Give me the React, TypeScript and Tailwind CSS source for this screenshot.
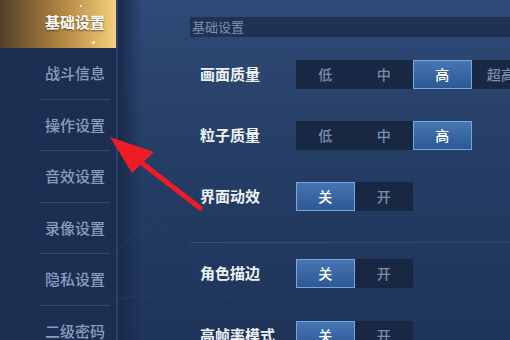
import React from 'react';

const menu = ['基础设置', '战斗信息', '操作设置', '音效设置', '录像设置', '隐私设置', '二级密码'];

type Row = { label: string; options: string[]; active: number; mt: string };

const rows: Row[] = [
  { label: '画面质量', options: ['低', '中', '高', '超高'], active: 2, mt: 'mt-[23px]' },
  { label: '粒子质量', options: ['低', '中', '高'], active: 2, mt: 'mt-[32px]' },
  { label: '界面动效', options: ['关', '开'], active: 0, mt: 'mt-[32px]' },
];

const rows2: Row[] = [
  { label: '角色描边', options: ['关', '开'], active: 0, mt: 'mt-[16px]' },
  { label: '高帧率模式', options: ['关', '开'], active: 0, mt: 'mt-[33px]' },
];

function Segmented({ options, active }: { options: string[]; active: number }) {
  return (
    <div className="flex h-[29px] bg-[#17263f]/90">
      {options.map((o, i) => (
        <div
          key={o}
          className={
            i === active
              ? 'flex w-[58.5px] shrink-0 items-center justify-center border border-[#79a6dc] bg-gradient-to-b from-[#4676b3] to-[#2d5893] text-[14px] font-medium text-white'
              : 'flex w-[58.5px] shrink-0 items-center justify-center text-[14px] font-medium text-[#7b8daa]'
          }
        >
          {o}
        </div>
      ))}
    </div>
  );
}

function SettingRow({ row }: { row: Row }) {
  return (
    <div className={`${row.mt} flex items-center pl-[10px]`}>
      <div className="w-[96px] shrink-0 whitespace-nowrap text-[15px] font-semibold text-[#eef2f8]">{row.label}</div>
      <Segmented options={row.options} active={row.active} />
    </div>
  );
}

export default function App() {
  return (
    <div
      className="relative flex h-[340px] w-[510px] overflow-hidden bg-[#1e3358]"
      style={{ fontFamily: '"Noto Sans CJK SC", "Noto Sans", sans-serif' }}
    >
      {/* sidebar */}
      <div className="flex w-[118px] shrink-0 flex-col border-r-2 border-[#2a426b] bg-[#1c2f53]">
        <div className="mt-[-4px] flex flex-col">
          {menu.map((m, i) =>
            i === 0 ? (
              <div
                key={m}
                className="relative flex h-[52px] items-center bg-gradient-to-r from-[#50402a] via-[#ad823f] to-[#f6d07a] pl-[45px] text-[15px] font-semibold text-white [text-shadow:0_1px_2px_rgba(60,30,0,0.7)]"
              >
                {m}
                <span className="absolute left-[80px] top-[9px] h-[2px] w-[2px] rounded-full bg-[#fff1c8]" />
                <span className="absolute left-[92px] top-[45px] h-[3px] w-[3px] rounded-full bg-[#fff1c8]" />
              </div>
            ) : (
              <div key={m} className="flex h-[51.5px] flex-col">
                <div className="flex flex-1 items-center pl-[45px] text-[15px] font-medium text-[#8a9dbd]">{m}</div>
                <div className="ml-[40px] mr-[6px] h-px bg-[#324a72]" />
              </div>
            )
          )}
        </div>
      </div>

      {/* main */}
      <div className="relative flex flex-1 flex-col bg-gradient-to-b from-[#2f4a77] via-[#243d64] to-[#1f3459] pl-[72px]">
        <div className="pointer-events-none absolute inset-y-0 left-0 w-[24px] bg-gradient-to-r from-[#182a4a] to-transparent" />
        <svg className="pointer-events-none absolute left-0 top-0" width="392" height="340" viewBox="0 0 392 340" fill="none">
          <path d="M0 250 C 20 225, 40 215, 55 232 S 75 290, 120 300" stroke="#2c4470" strokeWidth="1" opacity="0.6" />
          <path d="M0 300 C 30 290, 50 300, 70 320" stroke="#2c4470" strokeWidth="1" opacity="0.5" />
        </svg>

        <div className="relative mt-[17px] flex h-[23px] items-center bg-[#16243f]/60 pl-[2px] text-[13px] text-[#7e90ad]">
          基础设置
        </div>

        <div className="relative flex flex-col">
          {rows.map((r) => (
            <SettingRow key={r.label} row={r} />
          ))}
          <div className="mt-[31px] h-px bg-gradient-to-r from-[#34507c] to-[#2d4670]" />
          {rows2.map((r) => (
            <SettingRow key={r.label} row={r} />
          ))}
        </div>
      </div>

      {/* red arrow overlay */}
      <svg className="pointer-events-none absolute left-0 top-0" width="510" height="340" viewBox="0 0 510 340">
        <line x1="200" y1="208" x2="138" y2="160" stroke="#ee1c24" strokeWidth="5" strokeLinecap="round" />
        <polygon points="110,137 154,152 132,173" fill="#ee1c24" />
      </svg>
    </div>
  );
}
